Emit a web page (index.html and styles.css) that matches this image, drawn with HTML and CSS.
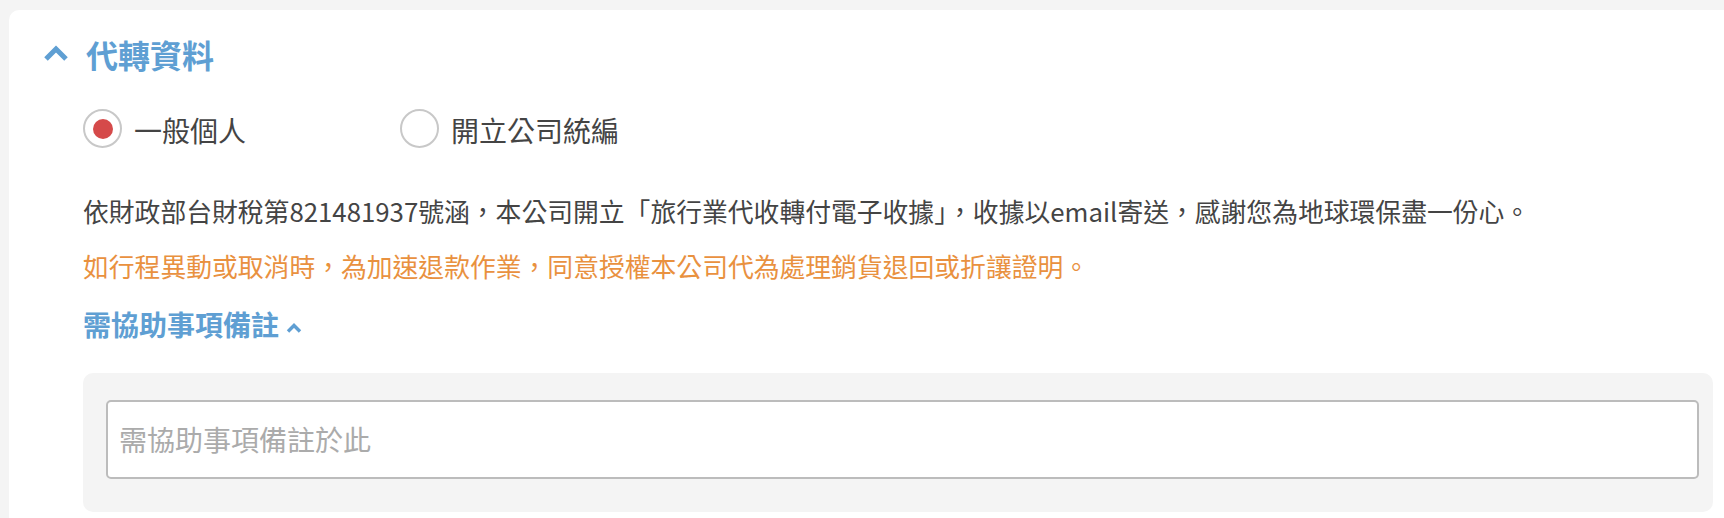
FILE: index.html
```html
<!DOCTYPE html>
<html lang="zh-Hant">
<head>
<meta charset="utf-8">
<link rel="stylesheet" href="styles.css">
</head>
<body>
<div class="page">
  <section class="card">
    <div class="heading">
      <svg class="chev" width="26" height="18" viewBox="0 0 26 18"><path d="M3 15 L13 5 L23 15" fill="none" stroke="#5f9fd3" stroke-width="5" stroke-linecap="butt" stroke-linejoin="miter"/></svg>
      <h2 class="heading-text">代轉資料</h2>
    </div>
    <div class="content">
      <div class="radios">
        <label class="radio">
          <span class="circle checked"><span class="dot"></span></span>
          <span class="radio-label">一般個人</span>
        </label>
        <label class="radio">
          <span class="circle"></span>
          <span class="radio-label">開立公司統編</span>
        </label>
      </div>
      <p class="desc">依財政部台財稅第821481937號涵，本公司開立「旅行業代收轉付電子收據」，收據以email寄送，感謝您為地球環保盡一份心。</p>
      <p class="notice">如行程異動或取消時，為加速退款作業，同意授權本公司代為處理銷貨退回或折讓證明。</p>
      <div class="remark-title">需協助事項備註<svg class="chev-small" width="16" height="11" viewBox="0 0 16 11"><path d="M2 9.5 L8 3.5 L14 9.5" fill="none" stroke="#5f9fd3" stroke-width="3.4"/></svg></div>
      <div class="remark-box">
        <div class="input">需協助事項備註於此</div>
      </div>
    </div>
  </section>
</div>
</body>
</html>
```

FILE: styles.css
```css
html, body {
  margin: 0;
  padding: 0;
  background: #f4f4f4;
  overflow: hidden;
}
body {
  width: 1724px;
  height: 518px;
  font-family: "Noto Sans CJK TC", "Noto Sans", sans-serif;
}
.page {
  padding: 10px 0 0 9px;
}
.card {
  background: #fff;
  border-radius: 10px 0 0 0;
  width: 1735px;
  height: 520px;
  box-sizing: border-box;
  padding: 24px 31px 0 36px;
}
.heading {
  display: flex;
  align-items: center;
  height: 40px;
}
.chev {
  display: block;
  margin-left: -2px;
  margin-top: -2px;
}
.heading-text {
  margin: 0 0 0 17px;
  font-size: 32px;
  line-height: 40px;
  font-weight: 700;
  color: #5f9fd3;
}
.content {
  margin-left: 38px;
}
.radios {
  display: flex;
  margin-top: 35px;
  height: 39px;
}
.radio {
  display: flex;
  align-items: center;
  width: 317px;
}
.circle {
  width: 39px;
  height: 39px;
  box-sizing: border-box;
  border: 2px solid #c8c8c8;
  border-radius: 50%;
  display: flex;
  align-items: center;
  justify-content: center;
}
.dot {
  width: 20px;
  height: 20px;
  border-radius: 50%;
  background: #d54a4a;
}
.radio-label {
  margin-left: 12px;
  font-size: 28px;
  line-height: 39px;
  color: #444;
  padding-top: 4px;
}
.desc {
  margin: 43px 0 0;
  font-size: 25.8px;
  line-height: 40px;
  color: #444;
}
.notice {
  margin: 15px 0 0;
  font-size: 25.8px;
  line-height: 40px;
  color: #e9913f;
}
.remark-title {
  margin-top: 18px;
  font-size: 28px;
  line-height: 40px;
  font-weight: 700;
  color: #5f9fd3;
  display: flex;
  align-items: center;
}
.chev-small {
  margin-left: 7px;
  margin-top: 6px;
}
.remark-box {
  margin-top: 29px;
  background: #f4f4f4;
  border-radius: 10px;
  padding: 27px 14px 33px 23px;
}
.input {
  height: 79px;
  box-sizing: border-box;
  border: 2px solid #bcbcbc;
  border-radius: 5px;
  background: #fff;
  padding-left: 11px;
  font-size: 28px;
  line-height: 75px;
  color: #ababab;
}
```
